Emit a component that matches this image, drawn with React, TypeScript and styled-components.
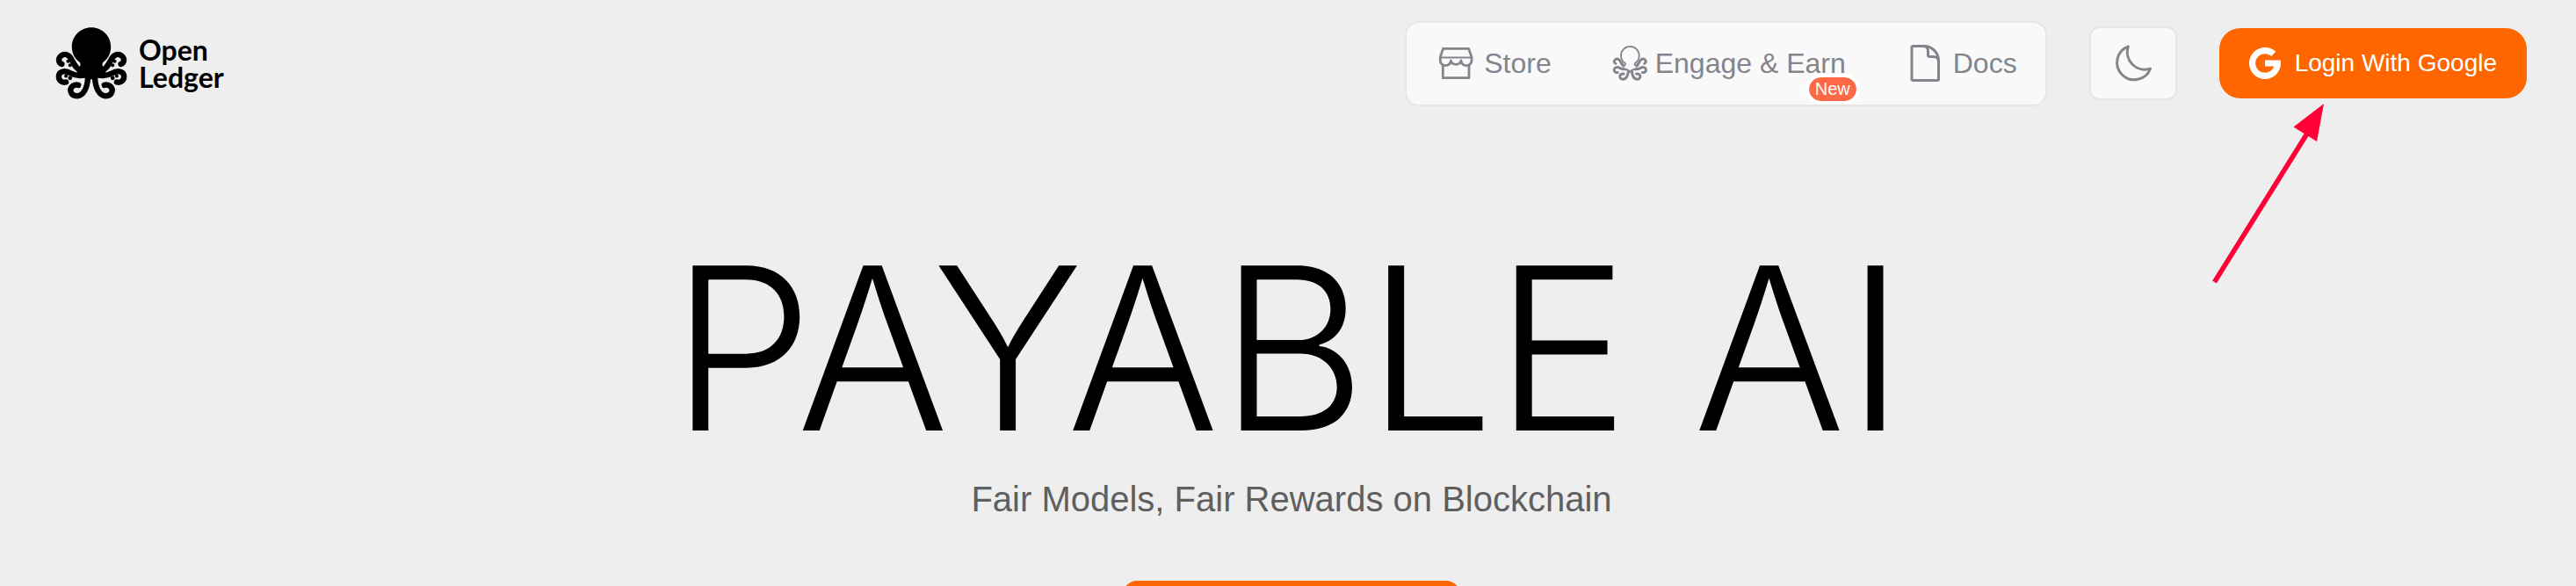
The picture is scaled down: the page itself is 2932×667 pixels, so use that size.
import React from "react";
import styled, { createGlobalStyle } from "styled-components";

const GlobalStyle = createGlobalStyle`
  * { box-sizing: border-box; }
  body {
    margin: 0;
    background: #eeeeee;
    font-family: "Liberation Sans", Arial, sans-serif;
  }
  button { font-family: inherit; cursor: pointer; }
`;

const Page = styled.div`
  position: relative;
  height: 100vh;
  overflow: hidden;
`;

const Header = styled.header`
  display: flex;
  align-items: center;
  justify-content: space-between;
  height: 144px;
  padding: 0 56px 0 63px;
`;

const Brand = styled.a`
  display: flex;
  align-items: center;
  gap: 13px;
  color: #000;
  text-decoration: none;
`;

const BrandName = styled.span`
  font-family: Lato, sans-serif;
  font-weight: 700;
  font-size: 32px;
  line-height: 31px;
`;

const Line = styled.span`
  display: block;
`;

const Actions = styled.div`
  display: flex;
  align-items: center;
  gap: 48px;
`;

const Nav = styled.nav`
  display: flex;
  align-items: center;
  gap: 70px;
  height: 97px;
  padding: 0 32px 0 36px;
  background: #f9f9f9;
  border: 2px solid #e6e6e6;
  border-radius: 16px;
`;

const NavLink = styled.a<{ $gap?: number }>`
  position: relative;
  display: flex;
  align-items: center;
  gap: ${(p) => p.$gap ?? 12}px;
  color: #84848c;
  font-size: 32px;
  line-height: 40px;
  white-space: nowrap;
  text-decoration: none;
`;

const Badge = styled.span`
  position: absolute;
  right: -16px;
  top: 32px;
  padding: 0 7px;
  border: 4px solid #fff;
  border-radius: 18px;
  background: #ff6847;
  background-clip: padding-box;
  color: #fff;
  font-size: 20px;
  line-height: 27px;
`;

const ThemeButton = styled.button`
  display: flex;
  align-items: center;
  justify-content: center;
  width: 100px;
  height: 84px;
  padding: 0;
  color: #84848c;
  background: #f9f9f9;
  border: 2px solid #e6e6e6;
  border-radius: 12px;
`;

const LoginButton = styled.button`
  display: flex;
  align-items: center;
  gap: 16px;
  height: 80px;
  padding: 0 34px;
  border: 0;
  border-radius: 24px;
  background: #ff6600;
  color: #fff;
  font-size: 28px;
  line-height: 36px;
  white-space: nowrap;
`;

const Hero = styled.main`
  display: flex;
  flex-direction: column;
  align-items: center;
  padding-top: 104px;
`;

const Title = styled.h1`
  margin: 0;
  font-family: Inter, "Liberation Sans", sans-serif;
  font-weight: 300;
  font-size: 258px;
  line-height: 296px;
  color: #000;
  white-space: nowrap;
`;

const Intro = styled.div`
  display: flex;
  flex-direction: column;
  align-items: center;
  gap: 69px;
  padding-left: 8px;
`;

const Subtitle = styled.p`
  margin: 0;
  font-size: 40px;
  line-height: 48px;
  color: #5f5f5f;
`;

const StartButton = styled.button`
  width: 384px;
  height: 88px;
  border: 0;
  border-radius: 16px;
  background: #ff6600;
`;

const Pointer = styled.svg`
  position: absolute;
  top: 118px;
  right: 286px;
`;

const Icon = styled.svg`
  display: block;
  flex: none;
  overflow: visible;
`;

/* One side of the octopus; the other side is its mirror image. */
const Side = ({ width }: { width: number }) => (
  <g fill="none" strokeWidth={width} strokeLinecap="round" strokeLinejoin="round">
    <path d="M130 184C112 178 104 162 97 148C88 128 74 123 62 130C48 139 49 155 62 160" />
    <path d="M140 196C122 202 106 198 92 191C76 181 56 183 52 197C49 212 60 225 76 221" />
    <path d="M150 208C148 240 136 266 114 268C91 268 86 246 98 235C105 230 112 229 118 231" />
  </g>
);

const Arms = ({ width }: { width: number }) => (
  <>
    <Side width={width} />
    <g transform="translate(324 0) scale(-1 1)">
      <Side width={width} />
    </g>
  </>
);

const Suckers = () => (
  <g stroke="none">
    <circle cx="83" cy="150" r="6" />
    <circle cx="90" cy="164" r="6" />
    <circle cx="76" cy="200" r="6" />
    <circle cx="90" cy="207" r="7" />
  </g>
);

const OctopusLogo = () => (
  <Icon width={82} height={82} viewBox="40 35 244 244" aria-hidden="true">
    <g fill="#000" stroke="#000">
      <path
        stroke="none"
        d="M162 36C125 36 96 65 96 102C96 124 106 142 122 153C128 160 124 172 112 176L120 204L150 208L162 212L174 208L204 204L212 176C200 172 196 160 202 153C218 142 228 124 228 102C228 65 199 36 162 36Z"
      />
      <Arms width={19} />
      <Suckers />
      <g transform="translate(324 0) scale(-1 1)">
        <Suckers />
      </g>
    </g>
  </Icon>
);

const OctopusOutline = () => (
  <Icon width={40} height={40} viewBox="46 35 240 244" aria-hidden="true">
    <g stroke="currentColor">
      <Arms width={18} />
    </g>
    <path
      d="M114 176C128 174 134 164 126 155C108 143 99 124 99 104C99 67 128 40 162 40C196 40 225 67 225 104C225 124 216 143 198 155C190 164 196 174 210 176L196 192L162 204L128 192Z"
      fill="#f9f9f9"
    />
    <path
      d="M114 176C128 174 134 164 126 155C108 143 99 124 99 104C99 67 128 40 162 40C196 40 225 67 225 104C225 124 216 143 198 155C190 164 196 174 210 176M128 196L150 206L162 218L174 206L196 196"
      fill="none"
      stroke="currentColor"
      strokeWidth={11}
      strokeLinejoin="round"
    />
  </Icon>
);

const StoreIcon = () => (
  <Icon width={40} height={40} viewBox="1 0 40 40" fill="none" stroke="currentColor" strokeWidth={2.8} strokeLinejoin="round" aria-hidden="true">
    <path d="M6.5 3.4H35.7L39 13V17A6 5.600 0 0 1 27 17A6 5.600 0 0 1 15.300 17A6 5.600 0 0 1 3.300 17V13Z" />
    <path d="M3.300 13.500H39" strokeWidth={2} />
    <path d="M6.300 22V36.700H36V22" />
  </Icon>
);

const DocIcon = () => (
  <Icon width={40} height={40} viewBox="0 0 40 40" fill="none" stroke="currentColor" strokeWidth={3} strokeLinejoin="round" aria-hidden="true">
    <path d="M6.500 0.500H19C28 0.500 35.500 8 35.500 17V38A1.500 1.500 0 0 1 34 39.500H6.500A1.500 1.500 0 0 1 5 38V2A1.500 1.500 0 0 1 6.500 0.500Z" />
    <path d="M18 0.500C21.500 0.500 23.500 3 23.500 6V11A1.500 1.500 0 0 0 25 12.500H29.500C33 12.500 35.500 14.500 35.500 18" />
  </Icon>
);

const MoonIcon = () => (
  <Icon width={40} height={40} viewBox="0 0 40 40" fill="none" stroke="currentColor" strokeWidth={3} strokeLinejoin="round" aria-hidden="true">
    <path d="M14.300 0.800A19.600 19.600 0 1 0 39.500 26.200A20 20 0 0 1 14.300 0.800Z" />
  </Icon>
);

const GoogleIcon = () => (
  <Icon width={36} height={36} viewBox="4 4 40 40" fill="#fff" aria-hidden="true">
    <path d="M43.611 20.083H42V20H24v8h11.303c-1.649 4.657-6.080 8-11.303 8-6.627 0-12-5.373-12-12s5.373-12 12-12c3.059 0 5.842 1.154 7.961 3.039l5.657-5.657C34.046 6.053 29.268 4 24 4 12.955 4 4 12.955 4 24s8.955 20 20 20 20-8.955 20-20c0-1.341-.138-2.650-.389-3.917z" />
  </Icon>
);

export default function App() {
  return (
    <Page>
      <GlobalStyle />
      <Header>
        <Brand href="#">
          <OctopusLogo />
          <BrandName>
            <Line>Open</Line>
            <Line>Ledger</Line>
          </BrandName>
        </Brand>
        <Actions>
          <Nav>
            <NavLink href="#store">
              <StoreIcon />
              Store
            </NavLink>
            <NavLink href="#engage" $gap={8}>
              <OctopusOutline />
              Engage &amp; Earn
              <Badge>New</Badge>
            </NavLink>
            <NavLink href="#docs">
              <DocIcon />
              Docs
            </NavLink>
          </Nav>
          <ThemeButton aria-label="Dark mode">
            <MoonIcon />
          </ThemeButton>
          <LoginButton>
            <GoogleIcon />
            Login With Google
          </LoginButton>
        </Actions>
      </Header>
      <Hero>
        <Title>PAYABLE AI</Title>
        <Intro>
          <Subtitle>Fair Models, Fair Rewards on Blockchain</Subtitle>
          <StartButton aria-label="Get started" />
        </Intro>
      </Hero>
      <Pointer width={128} height={206} viewBox="0 0 128 206" aria-hidden="true">
        <path d="M2.500 203L108 34" stroke="#ff0037" strokeWidth={5.600} />
        <path d="M127 0L92.500 26.500L119 43Z" fill="#ff0037" />
      </Pointer>
    </Page>
  );
}
